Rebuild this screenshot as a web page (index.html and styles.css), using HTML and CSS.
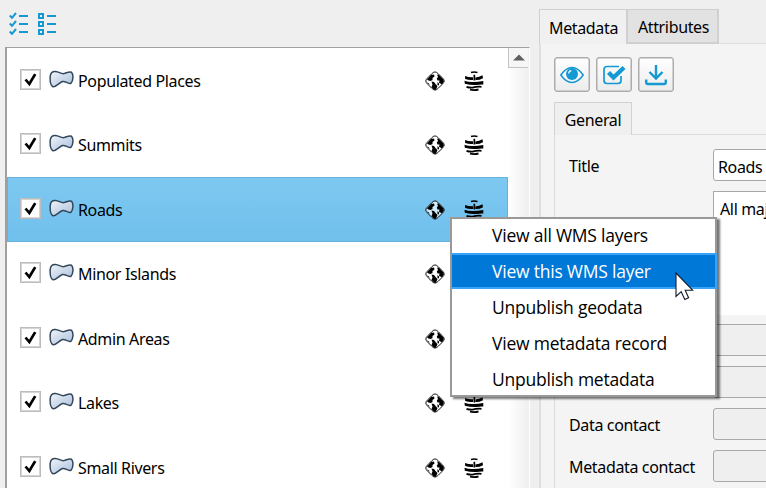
FILE: index.html
```html
<!DOCTYPE html>
<html lang="en">
<head>
<meta charset="utf-8">
<title>Layers</title>
<link rel="stylesheet" href="styles.css">
</head>
<body>
<svg class="defs" width="0" height="0">
  <defs>
    <linearGradient id="shape-fill" x1="0" y1="0" x2="1" y2="1">
      <stop offset="0" stop-color="#f0f4f9"/><stop offset="1" stop-color="#a9bfdb"/>
    </linearGradient>
    <symbol id="check" viewBox="0 0 21 21">
      <path d="M5 10.500 9.200 15.500 15.700 4.500" fill="none" stroke="#000" stroke-width="3"/>
    </symbol>
    <symbol id="polygon" viewBox="0 0 25 19">
      <path d="M1.2 6.5C1.5 2.5 3.5 1.2 6.5 1.4 10 1.6 12 4.2 15 3.6 18 2.8 20 1.2 22.5 2.3 24.8 5 24.2 10.5 22 13.2 19 14.5 16.500 10.800 13.500 11.500 10 12.600 6.500 17.500 4 16.700 1.300 15.500 1 10 1.200 6.500Z" fill="url(#shape-fill)" stroke="#33475c" stroke-width="1.500"/>
    </symbol>
    <symbol id="globe" viewBox="0 0 20 20">
      <path d="M10 .9Q11.500 .9 13.500 3L17 6.500Q19.200 8.500 19.200 10T17 13.500L13.500 17Q11.500 19.100 10 19.100T6.500 17L3 13.500Q.8 11.500 .8 10T3 6.500L6.500 3Q8.500 .9 10 .9Z" fill="#fff" fill-opacity=".65" stroke="#111" stroke-width="1"/>
      <path d="M2 8.500 6 4 9 3.500 9.500 5.500 7.500 7 7.500 9 5.500 10 3.500 9.500ZM6.500 10.500 9 11 10.500 13 12.500 15 11 18.800 9 18.800 6.500 16 7.500 13.500ZM12 3.500 14 4 18.500 8.500 18.800 10.500 16.800 13.500 15.500 12.500 14 12 14.500 9.500 12.500 9.500 11.800 7.500 13 6ZM2 11 4 12.500 4.500 14.500ZM12.500 11 14 12.500 14 14.500 12.500 14Z"/>
    </symbol>
    <symbol id="server" viewBox="0 0 20 20">
      <path d="M7 1.500Q10 .7 13.500 1.500" fill="none" stroke="#000" stroke-width="1.500"/>
      <path d="M1 5Q5 6.500 9 6.200V9Q5 9.400 1.200 8ZM11.500 6.500Q15 6.200 18.500 4.300L19 7.200Q15 9.300 11.500 9ZM9.500 3.700H11.200V9.500H9.500ZM.5 9.700Q4 11 9 10.900 13 11 19.300 10V13.500Q16 13.300 12.500 14 7 14.300 .8 12.800Z"/>
      <path d="M2.500 15.900Q5 16.800 8.500 16.700 13 15.300 17.500 15.800M6 18.700Q10 19.500 14.500 18.500" fill="none" stroke="#000" stroke-width="1.800"/>
    </symbol>
  </defs>
</svg>
<main class="app">
  <section class="layers">
    <div class="toolbar">
      <svg width="20" height="23" viewBox="0 0 20 23" fill="none" stroke="#1499d3" stroke-width="2"><path d="M.7 3.500 3 5.800 7 1M.7 11.500 3 13.800 7 9M.7 19.500 3 21.800 7 17M10 4H19M10 12H19M10 20H19"/></svg>
      <svg width="20" height="23" viewBox="0 0 20 23" fill="none" stroke="#1499d3" stroke-width="2"><path d="M2 2H6V6H2ZM2 10H6V14H2ZM2 18H6V22H2ZM10 4H19M10 12H19M10 20H19"/></svg>
    </div>
    <div class="list">
      <div class="rows">
        <div class="row"><span class="box"><svg><use href="#check"/></svg></span><svg class="poly"><use href="#polygon"/></svg><span class="name">Populated Places</span><svg class="ico"><use href="#globe"/></svg><svg class="ico"><use href="#server"/></svg></div>
        <div class="row"><span class="box"><svg><use href="#check"/></svg></span><svg class="poly"><use href="#polygon"/></svg><span class="name">Summits</span><svg class="ico"><use href="#globe"/></svg><svg class="ico"><use href="#server"/></svg></div>
        <div class="row selected"><span class="box"><svg><use href="#check"/></svg></span><svg class="poly"><use href="#polygon"/></svg><span class="name">Roads</span><svg class="ico"><use href="#globe"/></svg><svg class="ico"><use href="#server"/></svg></div>
        <div class="row"><span class="box"><svg><use href="#check"/></svg></span><svg class="poly"><use href="#polygon"/></svg><span class="name">Minor Islands</span><svg class="ico"><use href="#globe"/></svg><svg class="ico"><use href="#server"/></svg></div>
        <div class="row"><span class="box"><svg><use href="#check"/></svg></span><svg class="poly"><use href="#polygon"/></svg><span class="name">Admin Areas</span><svg class="ico"><use href="#globe"/></svg><svg class="ico"><use href="#server"/></svg></div>
        <div class="row"><span class="box"><svg><use href="#check"/></svg></span><svg class="poly"><use href="#polygon"/></svg><span class="name">Lakes</span><svg class="ico"><use href="#globe"/></svg><svg class="ico"><use href="#server"/></svg></div>
        <div class="row"><span class="box"><svg><use href="#check"/></svg></span><svg class="poly"><use href="#polygon"/></svg><span class="name">Small Rivers</span><svg class="ico"><use href="#globe"/></svg><svg class="ico"><use href="#server"/></svg></div>
      </div>
      <div class="scroll"><div class="up"><svg width="12" height="7"><path d="M0 6.500 6 .5 12 6.500Z" fill="#606060"/></svg></div></div>
    </div>
  </section>
  <section class="details">
    <div class="tabs"><div class="tab active">Metadata</div><div class="tab attr">Attributes</div></div>
    <div class="pane">
      <div class="buttons">
        <div class="btn"><svg width="24" height="20" viewBox="0 0 24 20"><path d="M.8 10Q6 2.500 12 2.500T23.200 10Q18 17.500 12 17.500T.8 10Z" fill="none" stroke="#1499d3" stroke-width="1.500"/><circle cx="12" cy="9" r="6" fill="#1499d3"/><path d="M8.700 8.500Q9 6 11.300 5.700" fill="none" stroke="#fff" stroke-width="1.200"/></svg></div>
        <div class="btn"><svg width="24" height="22" viewBox="0 0 24 22" fill="none" stroke="#1499d3"><path d="M17 2.500H5Q2 2.500 2 5.500V16.500Q2 19.500 5 19.500H16Q19 19.500 19 16.500V12" stroke-width="1.700"/><path d="M6.500 8.500 11.500 13.500 22 3.500" stroke-width="4.300"/></svg></div>
        <div class="btn"><svg width="24" height="22" viewBox="0 0 24 22" fill="none" stroke="#1499d3" stroke-width="2.400"><path d="M12 1V14M5.500 8 12 14.500 18.500 8"/><path d="M2.200 15.500V18.300Q2.200 20 4 20H20Q21.800 20 21.800 18.300V15.500"/></svg></div>
      </div>
      <div class="inner-tab">General</div>
      <div class="form">
        <div class="field"><label>Title</label><div class="input">Roads</div></div>
        <div class="field tall"><label></label><div class="textarea">All major roads</div></div>
        <div class="field"><label></label><div class="combo"></div></div>
        <div class="field"><label></label><div class="combo"></div></div>
        <div class="field"><label>Data contact</label><div class="combo"></div></div>
        <div class="field"><label>Metadata contact</label><div class="combo"></div></div>
      </div>
    </div>
  </section>
</main>
<div class="menu">
  <div class="item">View all WMS layers</div>
  <div class="item hover">View this WMS layer</div>
  <div class="item">Unpublish geodata</div>
  <div class="item">View metadata record</div>
  <div class="item">Unpublish metadata</div>
</div>
<svg class="cursor" width="20" height="29" viewBox="0 0 20 29"><path d="M1 1V24.500L6.200 19.700 9.800 27.500 13.600 25.700 10.200 18.200H17.600Z" fill="#fff" stroke="#111827" stroke-width="1.100"/></svg>
</body>
</html>
```
FILE: styles.css
```css
* { box-sizing: border-box; }
body { margin: 0; width: 766px; height: 488px; overflow: hidden; background: #efefef; color: #000; font: 16px/20px "Noto Sans", "Open Sans", sans-serif; letter-spacing: -0.35px; white-space: nowrap; }
svg { display: block; flex: none; }
.defs { position: absolute; }
.app { display: flex; height: 488px; overflow: hidden; }
.layers { width: 539px; padding-left: 5px; flex: none; }
.toolbar { height: 47px; padding: 12px 0 0 4px; display: flex; gap: 8px; }
.list { width: 525px; height: 441px; border-left: 2px solid #a0a0a0; border-top: 1px solid #a0a0a0; border-right: 1px solid #fff; background: #fff; display: flex; overflow: hidden; }
.rows { width: 501px; flex: none; }
.row { height: 64.5px; display: flex; align-items: center; padding: 0 24px 0 13px; }
.selected { background: linear-gradient(#7dc8f1, #70c0ec); border: 1px solid #66b2dc; padding: 0 23px 0 12px; }
.box { width: 21px; height: 21px; border: 1px solid #bcbcbc; box-shadow: inset 0 0 0 1px #d5d5d5; background: #fff; margin-top: -2px; }
.box svg { width: 19px; height: 19px; }
.poly { width: 25px; height: 19px; margin: -2px 4px 0 8px; }
.name { flex: 1; padding-top: 1px; }
.ico { width: 20px; height: 20px; margin-top: 1px; }
.ico + .ico { margin-left: 19px; }
.scroll { flex: 1; background: linear-gradient(90deg, #fff, #efefef); }
.up { height: 20px; width: 20px; border: 1px solid #c4c4c4; border-top: 0; border-right: 0; background: #f6f6f6; display: flex; align-items: center; justify-content: center; }
.details { width: 227px; flex: none; padding-top: 9px; display: flex; flex-direction: column; }
.tabs { display: flex; height: 34px; }
.tab { width: 88px; height: 35px; border: 1px solid #d0d0d0; border-width: 1px 1px 0 1px; display: flex; align-items: center; justify-content: center; background: #f0f0f0; padding: 2px 0 0 1px; z-index: 1; }
.attr { width: 92px; background: #e2e2e2; border-width: 1px 2px 2px 1px; padding: 1px 0 0 2px; }
.pane { flex: 1; border-left: 2px solid #dedede; border-top: 1px solid #dedede; background: #f4f4f4; padding: 13px 0 0 13px; }
.buttons { display: flex; gap: 6px; }
.btn { width: 36px; height: 35px; border: 1px solid #acacac; border-radius: 3px; background: linear-gradient(#fff, #ececec); display: flex; align-items: center; justify-content: center; box-shadow: inset 0 0 0 .5px #acacac; }
.inner-tab { margin-top: 10px; width: 78px; height: 33px; border: 1px solid #d2d2d2; border-bottom: 0; background: #efefef; display: flex; align-items: center; justify-content: center; padding-top: 2px; position: relative; z-index: 1; }
.form { height: 360px; border-left: 1px solid #dcdcdc; border-top: 1px solid #dcdcdc; padding: 14px 0 0 14px; margin-top: -1px; display: flex; flex-direction: column; gap: 10px; }
.field { display: flex; height: 32px; align-items: center; flex: none; }
.tall { height: 124px; margin-bottom: -1px; }
label { width: 144px; flex: none; padding-top: 2px; }
.input, .textarea, .combo { width: 100px; height: 100%; flex: none; border: 1px solid #a8a8a8; background: #fff; }
.input { border-radius: 3px; padding: 7px 0 0 4px; }
.textarea { padding: 7px 0 0 6px; border-bottom: 0; }
.combo { border-radius: 3px; background: #efefef; }
.menu { position: absolute; left: 450px; top: 217px; width: 267px; height: 180px; border: 2px solid #999; background: #fff; box-shadow: 3px 2px 2px #0008; font: 17.5px/36px "Open Sans", sans-serif; letter-spacing: -0.22px; }
.item { height: 36px; padding-left: 40px; }
.item:first-child { height: 34px; line-height: 33px; }
.item:last-child { height: 34px; line-height: 37px; }
.hover { margin-right: -2px; background: #0078d7; color: #fff; border: 2px solid #38a3f7; border-left: 0; line-height: 33px; }
.cursor { position: absolute; left: 675px; top: 272px; }
```
